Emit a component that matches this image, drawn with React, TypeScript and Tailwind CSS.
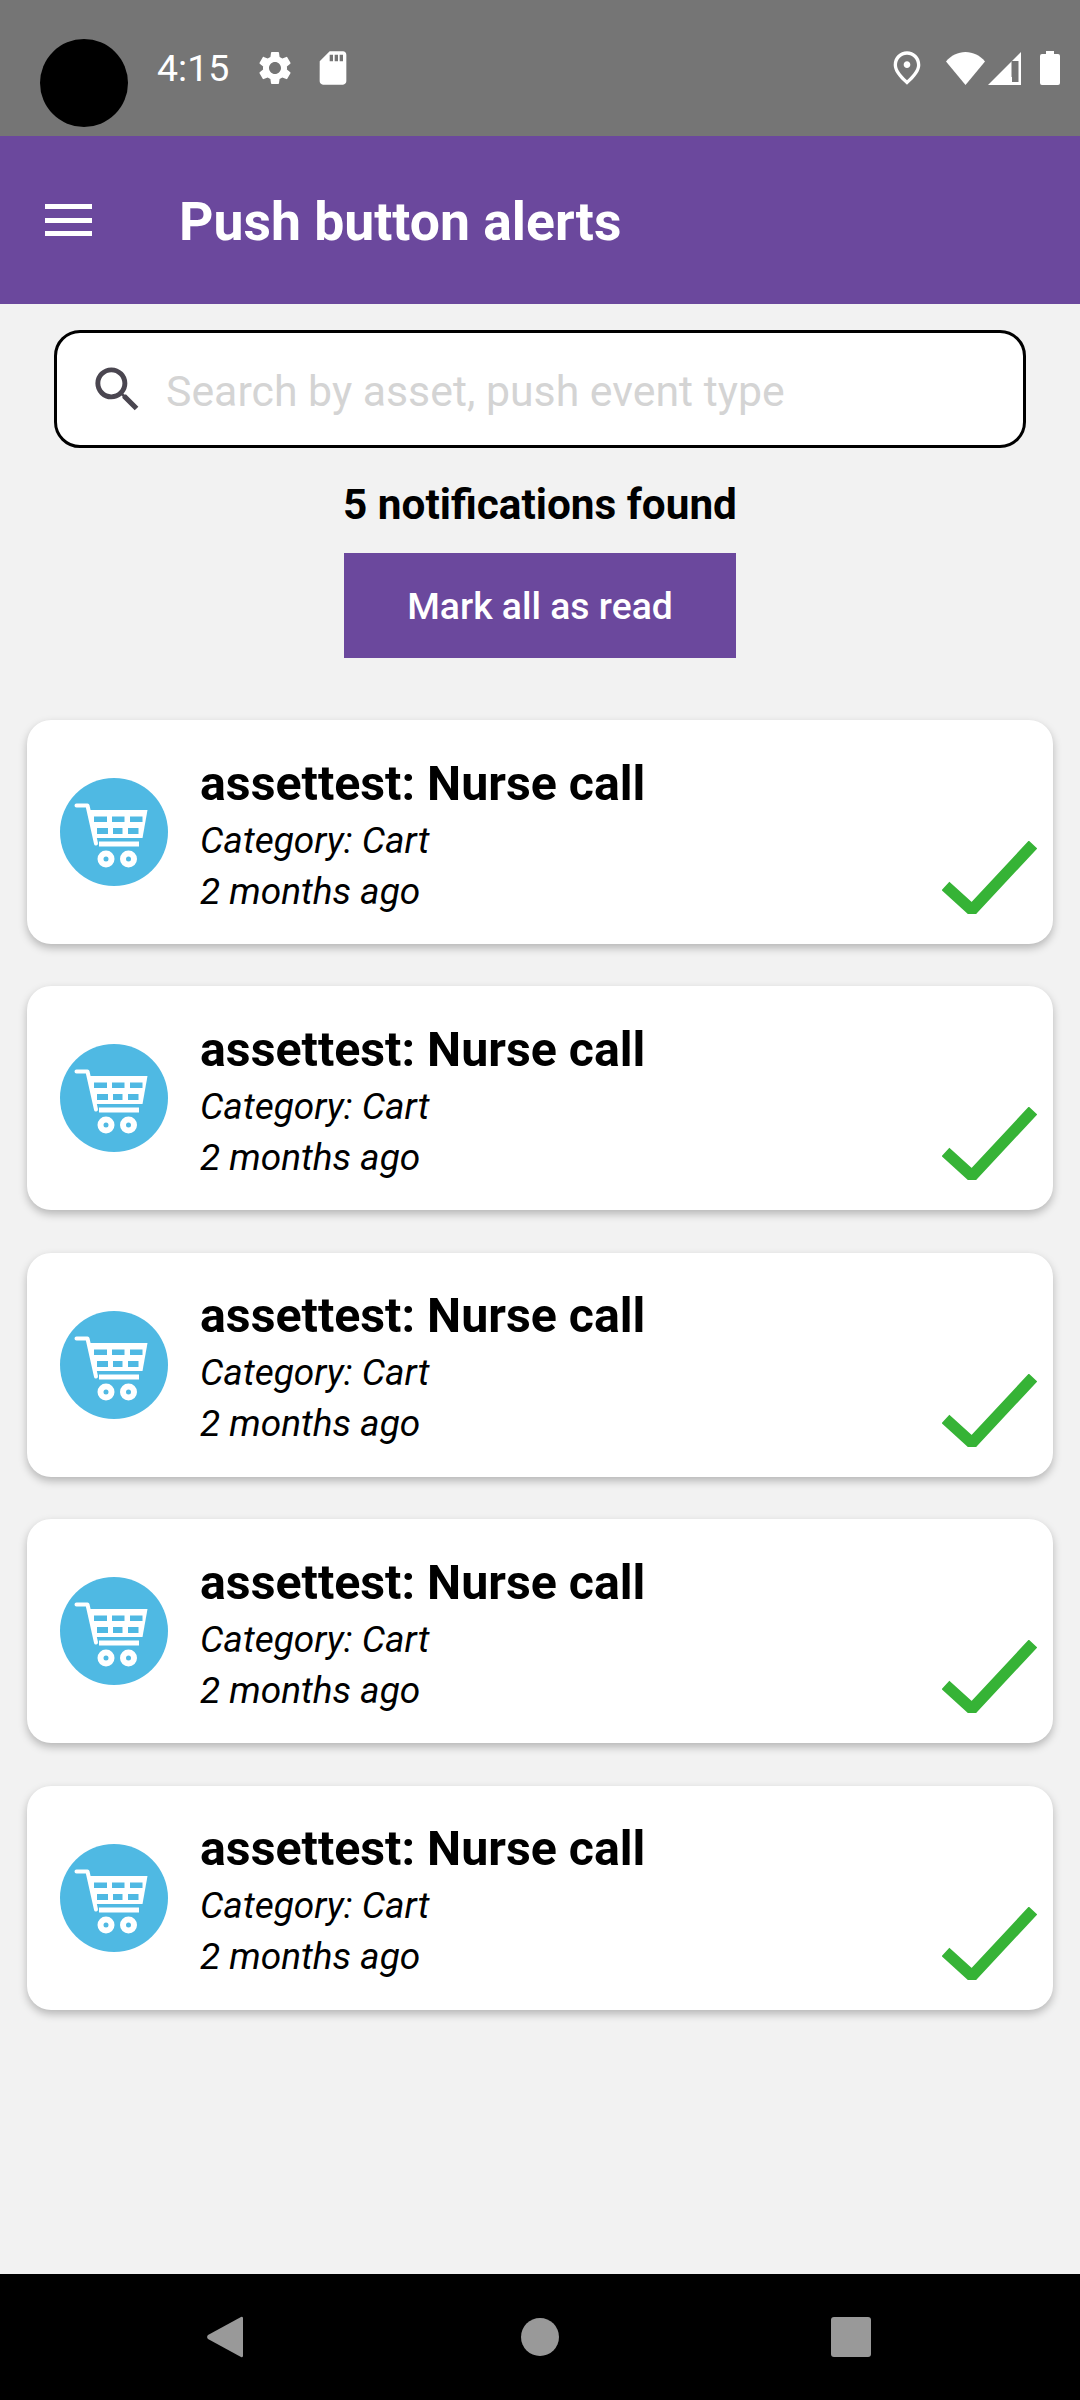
import { MdSettings, MdSdCard, MdOutlinePlace, MdSearch } from "react-icons/md";

function CartBadge() {
  return (
    <svg viewBox="0 0 108 108" className="h-[108px] w-[108px] shrink-0 ml-[0.5px]">
      <circle cx="54" cy="54" r="54" fill="#4fb9e3" />
      <path d="M16.5 27.5h11l8.5 38" fill="none" stroke="#fff" strokeWidth="4" strokeLinecap="round" strokeLinejoin="round" />
      <path d="M29 32h58.5l-5 28H35z" fill="#fff" />
      <g fill="#4fb9e3">
        <rect x="34" y="38.5" width="13" height="5.5" />
        <rect x="52" y="38.5" width="12.5" height="5.5" />
        <rect x="70" y="38.5" width="12.5" height="5.5" />
        <rect x="37" y="50" width="11" height="6" />
        <rect x="53" y="50" width="9.5" height="6" />
        <rect x="68" y="50" width="10.5" height="6" />
      </g>
      <rect x="39" y="63.5" width="40" height="5" fill="#fff" />
      <circle cx="46" cy="81" r="5.5" fill="none" stroke="#fff" strokeWidth="6" />
      <circle cx="68.5" cy="81" r="5.5" fill="none" stroke="#fff" strokeWidth="6" />
    </svg>
  );
}

function Card() {
  return (
    <div className="flex h-[224px] items-center rounded-[24px] bg-white pl-[32px] pr-[16px] shadow-[0_4px_9px_rgba(0,0,0,0.25)]">
      <CartBadge />
      <div className="ml-[32.5px] flex min-w-0 flex-col pt-[4px] text-black">
        <div className="text-[48.3px] font-bold leading-[64px]">assettest: Nurse call</div>
        <div className="text-[37px] italic leading-[50px]">Category: Cart</div>
        <div className="text-[37px] italic leading-[51px]">2 months ago</div>
      </div>
      <svg viewBox="0 0 95 73" className="mb-[30px] ml-auto h-[73px] w-[95px] shrink-0 self-end">
        <path d="M3.5 45 30 69 91 3.5" fill="none" stroke="#36b336" strokeWidth="11.5" />
      </svg>
    </div>
  );
}

export default function App() {
  return (
    <div className="flex h-[2400px] w-[1080px] flex-col overflow-hidden bg-[#f2f2f2] font-['Roboto',sans-serif]">
      {/* Status bar */}
      <div className="relative flex h-[136px] shrink-0 items-start bg-[#757575] pl-[157px] pr-[20px] pt-[48px] text-white">
        <div className="absolute left-[40px] top-[39px] h-[88px] w-[88px] rounded-full bg-black" />
        <span className="text-[37.5px] leading-[40px]">4:15</span>
        <MdSettings className="ml-[26px] h-[40px] w-[40px]" />
        <MdSdCard className="ml-[18px] h-[40px] w-[40px]" />
        <div className="ml-auto flex items-center">
          <MdOutlinePlace className="h-[40px] w-[40px]" />
          <svg viewBox="0 0 39 33" className="ml-[19px] h-[33px] w-[39px]">
            <path d="M0 9.5C5 3.5 12 0 19.5 0S34 3.5 39 9.5L19.5 33z" fill="#fff" />
          </svg>
          <svg viewBox="0 0 33 33" className="ml-[3px] h-[33px] w-[33px]">
            <path d="M33 0v33H0z" fill="#fff" />
            <path d="M23.5 9v21h7V9z" fill="#757575" />
            <path d="M24 25v5h-1V25z" fill="#fff" />
          </svg>
          <svg viewBox="0 0 20 34" className="ml-[19px] h-[34px] w-[20px]">
            <path d="M6 0h8v3h4a2 2 0 0 1 2 2v27a2 2 0 0 1-2 2H2a2 2 0 0 1-2-2V5a2 2 0 0 1 2-2h4z" fill="#fff" />
          </svg>
        </div>
      </div>

      {/* Header */}
      <div className="flex h-[168px] shrink-0 items-center bg-[#6b489d] pl-[45px]">
        <div className="flex h-[32px] w-[47px] flex-col justify-between">
          <div className="h-[5px] bg-white" />
          <div className="h-[5px] bg-white" />
          <div className="h-[5px] bg-white" />
        </div>
        <h1 className="ml-[87px] pt-[3px] text-[53.5px] font-bold leading-none text-white">Push button alerts</h1>
      </div>

      {/* Content */}
      <div className="flex min-h-0 flex-1 flex-col">
        <div className="mx-[54px] mt-[26px] flex h-[118px] items-center rounded-[26px] border-[3px] border-black bg-white pl-[31px]">
          <MdSearch className="h-[59px] w-[59px] shrink-0 text-[#4a4650]" />
          <span className="ml-[19px] pt-[5px] text-[42.8px] leading-none text-[#d4d4d4]">Search by asset, push event type</span>
        </div>
        <div className="mt-[33px] text-center text-[42.3px] font-bold leading-[48px] text-black">5 notifications found</div>
        <button className="mx-auto mt-[24px] h-[105px] w-[392px] bg-[#6b489d] pt-[2px] text-[37.3px] font-medium text-white">Mark all as read</button>
        <div className="mx-[27px] mt-[62px] flex flex-col gap-[42.4px]">
          <Card />
          <Card />
          <Card />
          <Card />
          <Card />
        </div>
      </div>

      {/* Nav bar */}
      <div className="flex h-[126px] shrink-0 items-center bg-black">
        <svg viewBox="0 0 36 42" className="ml-[207px] h-[42px] w-[36px]">
          <path d="M34 1a1.5 1.5 0 0 1 2 1v38a1.5 1.5 0 0 1-2 1L1 23a3 3 0 0 1 0-4z" fill="#999" />
        </svg>
        <div className="ml-[278px] h-[38px] w-[38px] rounded-full bg-[#999]" />
        <div className="ml-[272px] h-[40px] w-[40px] rounded-[3px] bg-[#999]" />
      </div>
    </div>
  );
}
